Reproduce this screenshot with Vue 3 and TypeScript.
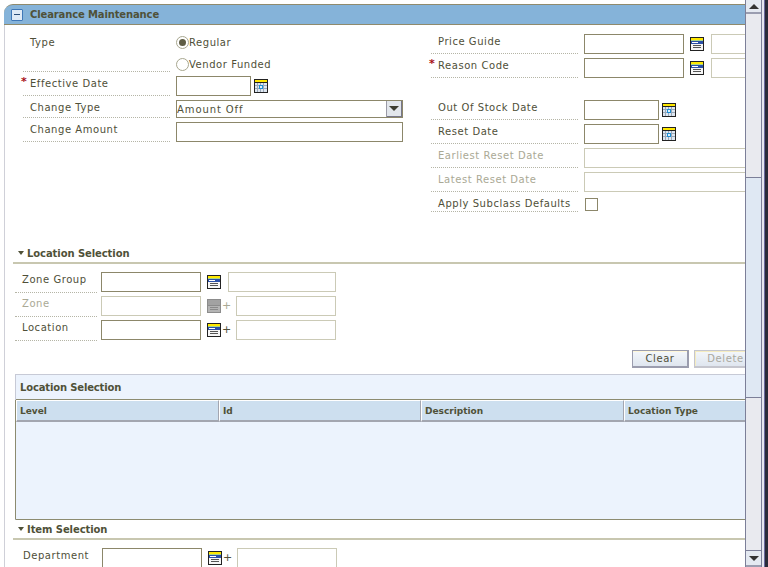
<script setup lang="ts">
interface Field { label: string; kind: 'date' | 'long'; disabled?: boolean }
const rightRows: Field[] = [
  { label: 'Out Of Stock Date', kind: 'date' },
  { label: 'Reset Date', kind: 'date' },
  { label: 'Earliest Reset Date', kind: 'long', disabled: true },
  { label: 'Latest Reset Date', kind: 'long', disabled: true },
]
const lookups = [
  { label: 'Zone Group', disabled: false, plus: false },
  { label: 'Zone', disabled: true, plus: true },
  { label: 'Location', disabled: false, plus: true },
]
const columns = [
  { name: 'Level', width: 203 },
  { name: 'Id', width: 202 },
  { name: 'Description', width: 203 },
  { name: 'Location Type', width: 180 },
]
</script>

<template>
  <div class="page">
    <svg class="defs" width="0" height="0" aria-hidden="true">
      <symbol id="cal" viewBox="0 0 14 14">
        <rect x="0" y="0" width="14" height="14" fill="#222" />
        <rect x="1" y="1" width="12" height="2" fill="#ffe800" />
        <rect x="1" y="4" width="12" height="9" fill="#dfe7f1" />
        <path d="M3.5 4v9M6.5 4v9M9.500 4v9M1 6.500h12M1 9.500h12" stroke="#9aa8b8" stroke-width="1" />
        <rect x="5" y="6" width="4" height="4" fill="#1e8fd6" />
        <rect x="6" y="7" width="2" height="2" fill="#dff1fb" />
      </symbol>
      <symbol id="list" viewBox="0 0 14 14">
        <rect x="0" y="0" width="14" height="14" fill="#222" />
        <rect x="1" y="1" width="12" height="2" fill="#ffe800" />
        <rect x="1" y="3" width="12" height="1" fill="#a9d68a" />
        <rect x="1" y="4" width="12" height="3" fill="#2a4fa8" />
        <rect x="2" y="5" width="6" height="1" fill="#fff" />
        <rect x="1" y="7" width="12" height="6" fill="#f6f6f6" />
        <path d="M3 8.500h8M3 10.500h8" stroke="#555" stroke-width="1" />
      </symbol>
      <symbol id="list-off" viewBox="0 0 14 14">
        <rect x="0" y="0" width="14" height="14" fill="#8c8c8c" />
        <rect x="1" y="1" width="12" height="5" fill="#a2a2a2" />
        <rect x="1" y="7" width="12" height="6" fill="#b4b4b4" />
        <path d="M3 8.500h8M3 10.500h8" stroke="#8a8a8a" stroke-width="1" />
      </symbol>
    </svg>

    <main class="content">
      <header class="title-bar">
        <span class="collapse"><i></i></span>
        <h1>Clearance Maintenance</h1>
      </header>

      <div class="body">
        <section class="form">
          <div class="col-left">
            <div class="row type-row">
              <div class="label wide tall">Type</div>
              <div class="radios">
                <label class="radio"><span class="dot on"></span>Regular</label>
                <label class="radio"><span class="dot"></span>Vendor Funded</label>
              </div>
            </div>
            <div class="row">
              <div class="label wide"><b class="star">*</b>Effective Date</div>
              <input class="box w75" type="text" />
              <svg class="ico cal-gap"><use href="#cal" /></svg>
            </div>
            <div class="row select-row">
              <div class="label wide short">Change Type</div>
              <div class="select">
                <span class="select-value">Amount Off</span>
                <span class="arrow"></span>
              </div>
            </div>
            <div class="row">
              <div class="label wide">Change Amount</div>
              <input class="box w227" type="text" />
            </div>
          </div>

          <div class="col-right">
            <div class="row">
              <div class="label rlabel">Price Guide</div>
              <input class="box w100" type="text" />
              <svg class="ico list-gap"><use href="#list" /></svg>
              <input class="box off desc-r" type="text" disabled />
            </div>
            <div class="row">
              <div class="label rlabel"><b class="star">*</b>Reason Code</div>
              <input class="box w100" type="text" />
              <svg class="ico list-gap"><use href="#list" /></svg>
              <input class="box off desc-r" type="text" disabled />
            </div>
            <div class="spacer"></div>
            <div v-for="r in rightRows" :key="r.label" class="row">
              <div class="label rlabel" :class="{ muted: r.disabled }">{{ r.label }}</div>
              <template v-if="r.kind === 'date'">
                <input class="box w75" type="text" />
                <svg class="ico cal-gap"><use href="#cal" /></svg>
              </template>
              <input v-else class="box off long" type="text" disabled />
            </div>
            <div class="row check-row">
              <div class="label rlabel short2">Apply Subclass Defaults</div>
              <span class="check"></span>
            </div>
          </div>
        </section>

        <section class="section loc">
          <h2 class="sec-head"><span class="tri"></span>Location Selection</h2>
          <div class="lookups">
            <div v-for="l in lookups" :key="l.label" class="row">
              <div class="label sub" :class="{ muted: l.disabled }">{{ l.label }}</div>
              <input class="box w100" :class="{ off: l.disabled }" type="text" :disabled="l.disabled" />
              <svg class="ico lk"><use :href="l.disabled ? '#list-off' : '#list'" /></svg>
              <span v-if="l.plus" class="plus" :class="{ muted: l.disabled }">+</span>
              <span v-else class="noplus"></span>
              <input class="box off" :class="l.plus ? 'w100' : 'w108'" type="text" disabled />
            </div>
          </div>
          <div class="buttons">
            <button type="button" class="btn">Clear</button>
            <button type="button" class="btn dis" disabled>Delete</button>
          </div>
          <div class="table-panel">
            <div class="panel-title">Location Selection</div>
            <div class="grid">
              <div class="thead">
                <div v-for="c in columns" :key="c.name" class="th" :style="{ width: c.width + 'px' }">{{ c.name }}</div>
              </div>
              <div class="tbody"></div>
            </div>
          </div>
        </section>

        <section class="section item">
          <h2 class="sec-head"><span class="tri"></span>Item Selection</h2>
          <div class="row dept">
            <div class="label sub">Department</div>
            <input class="box w100" type="text" />
            <svg class="ico lk"><use href="#list" /></svg>
            <span class="plus">+</span>
            <input class="box off w100" type="text" disabled />
          </div>
        </section>
      </div>
    </main>

    <aside class="scrollbar">
      <div class="sb-btn top"><i class="up"></i></div>
      <div class="track">
        <div class="thumb"></div>
      </div>
      <div class="sb-btn bottom"><i class="down"></i></div>
    </aside>
    <div class="edge"></div>
  </div>
</template>

<style scoped>
.page {
  display: flex;
  width: 768px;
  height: 567px;
  overflow: hidden;
  background: #fff;
  color: #4f4f38;
  font-family: "DejaVu Sans", Verdana, sans-serif;
  font-size: 10px;
  letter-spacing: 0.55px;
}
.defs { position: absolute; }
.content {
  width: 745px;
  flex: none;
  overflow: hidden;
  padding-top: 4px;
  box-sizing: border-box;
}
.title-bar {
  display: flex;
  align-items: center;
  height: 21px;
  margin-left: 4px;
  box-sizing: border-box;
  background: #85b3d9;
  border-top: 1px solid #8f8a6c;
  border-bottom: 1px solid #8f8a6c;
  border-top-left-radius: 9px;
  padding-left: 7px;
}
.collapse {
  width: 10px;
  height: 10px;
  flex: none;
  border: 1px solid #3f78b8;
  background: #dfeaf6;
  border-radius: 1px;
  display: flex;
  align-items: center;
  justify-content: center;
}
.collapse i { display: block; width: 6px; height: 1px; background: #2d4f7a; }
h1 {
  margin: 0 0 0 7px;
  font-size: 10px;
  font-weight: bold;
  color: #4f5138;
  letter-spacing: -0.13px;
}
.body {
  margin-left: 4px;
  border-left: 1px solid #cfd0d8;
  height: 560px;
}
.form {
  display: flex;
  height: 218px;
}
.col-left { width: 426px; flex: none; padding: 10px 0 0 18px; box-sizing: border-box; }
.col-right { flex: none; width: 400px; padding-top: 9px; }
.row { display: flex; align-items: flex-start; margin-bottom: 4px; }
.label {
  position: relative;
  height: 20px;
  box-sizing: border-box;
  line-height: 14px;
  padding-top: 1px;
  border-bottom: 1px dotted #b5b5a6;
  padding-left: 7px;
  flex: none;
}
.wide { width: 147px; margin-right: 6px; }
.tall { height: 37px; }
.short { height: 18px; }
.rlabel { width: 147px; margin-right: 6px; }
.short2 { height: 14px; line-height: 11px; padding-top: 0; }
.muted { color: #aaa995; }
.star {
  position: absolute;
  left: -2px;
  top: -1px;
  color: #a80f18;
  font-weight: bold;
  font-size: 11px;
}
.type-row { margin-bottom: 4px; }
.radios { display: flex; flex-direction: column; gap: 8px; }
.radio { display: flex; align-items: center; height: 14px; }
.dot {
  width: 11px;
  height: 11px;
  border: 1px solid #a8a78f;
  border-radius: 50%;
  position: relative;
  background: #fff;
  flex: none;
}
.dot.on::after {
  content: "";
  position: absolute;
  left: 2px;
  top: 2px;
  width: 7px;
  height: 7px;
  border-radius: 50%;
  background: #5f5d45;
}
.box {
  display: block;
  flex: none;
  height: 20px;
  box-sizing: border-box;
  border: 1px solid #8c876a;
  background: #fff;
  padding: 0;
  margin: 0;
  outline: none;
  border-radius: 0;
}
.box.off { border-color: #cbcab6; background: #fff; }
.w75 { width: 75px; }
.w100 { width: 100px; }
.w108 { width: 108px; }
.w227 { width: 227px; }
.desc-r { width: 60px; margin-left: 7px; }
.long { width: 200px; }
.ico { width: 14px; height: 14px; flex: none; }
.cal-gap { margin: 3px 0 0 3px; }
.list-gap { margin: 3px 0 0 6px; }
.spacer { height: 18px; }
.select-row { margin-bottom: 4px; }
.select {
  display: flex;
  align-items: center;
  justify-content: space-between;
  box-sizing: border-box;
  width: 227px;
  height: 18px;
  border: 1px solid #8c876a;
  letter-spacing: 0.9px;
}
.select-value { padding-top: 1px; }
.arrow {
  width: 16px;
  height: 16px;
  background: #e2e6ec;
  border-left: 1px solid #9a9aa6;
  box-shadow: inset -1px -1px 0 #77778a;
  position: relative;
  box-sizing: border-box;
}
.arrow::after {
  content: "";
  position: absolute;
  left: 2px;
  top: 5px;
  border-left: 5px solid transparent;
  border-right: 5px solid transparent;
  border-top: 5px solid #3c3c30;
}
.check-row { margin-top: 6px; }
.check {
  display: block;
  width: 13px;
  height: 13px;
  border: 1px solid #8c876a;
  box-sizing: border-box;
  margin-left: 1px;
}
.section { margin-left: 8px; }
.item { margin-top: -1px; }
.sec-head {
  margin: 0;
  height: 14px;
  display: flex;
  align-items: center;
  font-size: 10px;
  font-weight: bold;
  color: #4f5138;
  letter-spacing: -0.08px;
  padding: 3px 0 2px 5px;
  border-bottom: 2px solid #c8c7b0;
}
.tri {
  width: 0;
  height: 0;
  border-left: 3.5px solid transparent;
  border-right: 3.5px solid transparent;
  border-top: 4px solid #4f5138;
  margin-right: 3px;
}
.lookups { padding: 8px 0 0 2px; }
.lookups .row { margin-bottom: 3px; }
.sub { width: 82px; margin-right: 4px; height: 21px; }
.lk { margin: 3px 0 0 6px; }
.plus { width: 15px; padding-left: 1px; box-sizing: border-box; font-size: 11px; line-height: 20px; flex: none; letter-spacing: 0; }
.noplus { width: 7px; flex: none; }
.buttons {
  display: flex;
  justify-content: flex-start;
  gap: 5px;
  padding: 6px 0 0 619px;
  height: 24px;
}
.btn {
  flex: none;
  width: 57px;
  height: 18px;
  padding: 0;
  background: linear-gradient(#f4f7fb, #dfe6ef);
  border: 1px solid #9b9dae;
  box-shadow: inset 0 1px 0 #fff7d8;
  border-width: 1px 2px 2px 1px;
  color: #4f4f38;
  font: 10px "DejaVu Sans", Verdana, sans-serif;
  letter-spacing: 0.6px;
}
.btn.dis { width: 64px; color: #a9a9a0; border-color: #c5c6ce; box-shadow: inset 1px 1px 0 #f5ecc0; }
.table-panel {
  margin: 0 0 0 2px;
  background: #ecf3fd;
  border-top: 1px solid #c7cad6;
  border-left: 1px solid #c7cad6;
  height: 146px;
  box-sizing: border-box;
  border-bottom: 1px solid #8c8b70;
}
.panel-title {
  height: 25px;
  box-sizing: border-box;
  font-weight: bold;
  line-height: 25px;
  padding-left: 4px;
  color: #4f5138;
  letter-spacing: -0.15px;
  border-bottom: 1px solid #8c8b70;
}
.grid { border-left: 1px solid #8c8b70; margin-left: -1px; height: 119px; }
.thead { display: flex; }
.th {
  flex: none;
  height: 22px;
  box-sizing: border-box;
  background: #cddfef;
  border-left: 1px solid #fff;
  border-right: 1px solid #a3a6b0;
  border-bottom: 2px solid #a3a6b0;
  border-top: 1px solid #fff;
  padding-left: 3px;
  font-weight: bold;
  font-size: 9px;
  letter-spacing: 0;
  line-height: 21px;
  color: #4f5138;
}
.tbody { height: 96px; }
.dept { padding: 8px 0 0 3px; }
.scrollbar {
  width: 17px;
  flex: none;
  display: flex;
  flex-direction: column;
  box-sizing: border-box;
  border-left: 1px solid #7c7f98;
  border-right: 1px solid #7c7f98;
  background: #e9eaef;
}
.sb-btn {
  flex: none;
  background: #e4e9f1;
  display: flex;
  justify-content: center;
  align-items: center;
}
.sb-btn.top {
  height: 12px;
  border-bottom: 2px solid #9a9db0;
}
.sb-btn.bottom {
  height: 17px;
  border-top: 1px solid #7c7f98;
  border-bottom: 2px solid #9a9db0;
  box-sizing: border-box;
}
.up { border-left: 5px solid transparent; border-right: 5px solid transparent; border-bottom: 5px solid #333; }
.down { border-left: 5px solid transparent; border-right: 5px solid transparent; border-top: 5px solid #333; }
.track { flex: 1; padding-top: 163px; }
.thumb {
  height: 221px;
  background: #dfe8f3;
  border-top: 1px solid #7c7f98;
  border-bottom: 1px solid #7c7f98;
  box-sizing: border-box;
}
.edge {
  flex: none;
  width: 6px;
  background: linear-gradient(to right, #e6e6f0 0 2px, #6c6a9e 2px 3px, #2b2b3a 3px 6px);
}
</style>
